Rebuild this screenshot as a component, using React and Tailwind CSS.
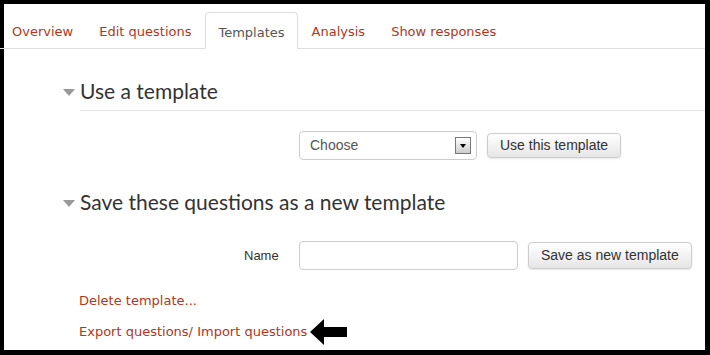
import React from 'react';

const tabs = ['Overview', 'Edit questions', 'Templates', 'Analysis', 'Show responses'];

const Heading = ({ children }) => (
  <div className="flex items-center">
    <span className="w-0 h-0 border-l-[6px] border-r-[6px] border-t-[7px] border-l-transparent border-r-transparent border-t-[#999] mr-[5px] mt-[2px]" />
    <h3 className="text-[21px] text-[#333] leading-[30px]" style={{ fontFamily: 'Lato, "Open Sans", sans-serif' }}>{children}</h3>
  </div>
);

const App = () => {
  return (
    <div className="w-[710px] h-[355px] bg-black pt-[4px] pl-[4px] pr-[5px] pb-[5px] overflow-hidden" style={{ fontFamily: '"DejaVu Sans", Verdana, sans-serif' }}>
      <div className="bg-white h-full">
        {/* tab strip */}
        <div className="flex items-end h-[45px] border-b border-[#ddd] -ml-[4px]">
          {tabs.map((t) => (
            <div
              key={t}
              className={`h-[37px] px-[12px] pt-[4px] flex items-center text-[13px] mr-[2px] ${
                t === 'Templates'
                  ? 'text-[#555] border border-[#ddd] border-b-white rounded-t-[4px] -mb-px bg-white'
                  : 'text-[#b3351b]'
              }`}
            >
              {t}
            </div>
          ))}
        </div>

        <div className="pl-[59px] pt-[27px]">
          <Heading>Use a template</Heading>
          <div className="ml-[17px] border-b border-[#e5e5e5] mt-[4px]" />

          <div className="flex items-center mt-[20px] ml-[236px]">
            <div className="w-[178px] h-[29px] border border-[#ccc] rounded-[4px] flex items-center justify-between pl-[10px] pr-[5px] text-[14px] text-[#555]" style={{ fontFamily: '"Liberation Sans", Arial, sans-serif' }}>
              <span>Choose</span>
              <span className="w-[16px] h-[17px] border border-[#777] bg-gradient-to-b from-white to-[#ccc] flex items-center justify-center">
                <span className="w-0 h-0 border-l-[3px] border-r-[3px] border-t-[4px] border-l-transparent border-r-transparent border-t-black" />
              </span>
            </div>
            <button className="ml-[10px] h-[25px] px-[12px] border border-[#ccc] rounded-[4px] bg-gradient-to-b from-white to-[#e6e6e6] text-[14px] text-[#333] shadow-[0_1px_2px_rgba(0,0,0,0.1)]" style={{ fontFamily: '"Liberation Sans", Arial, sans-serif' }}>
              Use this template
            </button>
          </div>

          <div className="mt-[27px]">
            <Heading>Save these questions as a new template</Heading>
          </div>

          <div className="flex items-center mt-[24px] ml-[181px]" style={{ fontFamily: '"Liberation Sans", Arial, sans-serif' }}>
            <span className="text-[13px] text-[#333] w-[55px]">Name</span>
            <div className="w-[219px] h-[29px] border border-[#ccc] rounded-[4px]" />
            <button className="ml-[10px] h-[27px] px-[12px] border border-[#ccc] rounded-[4px] bg-gradient-to-b from-white to-[#e6e6e6] text-[14px] text-[#333] shadow-[0_1px_2px_rgba(0,0,0,0.1)]">
              Save as new template
            </button>
          </div>

          <div className="ml-[16px] mt-[15px] text-[13px] text-[#b3351b] leading-[31px]">
            <div>Delete template...</div>
            <div className="flex items-center">
              <span>Export questions/ Import questions</span>
              <svg width="38" height="26" viewBox="0 0 38 26" className="ml-[3px]">
                <polygon points="0,13 14,0 14,8 37,8 37,18 14,18 14,26" fill="#000" />
              </svg>
            </div>
          </div>
        </div>
      </div>
    </div>
  );
};

export default App;
